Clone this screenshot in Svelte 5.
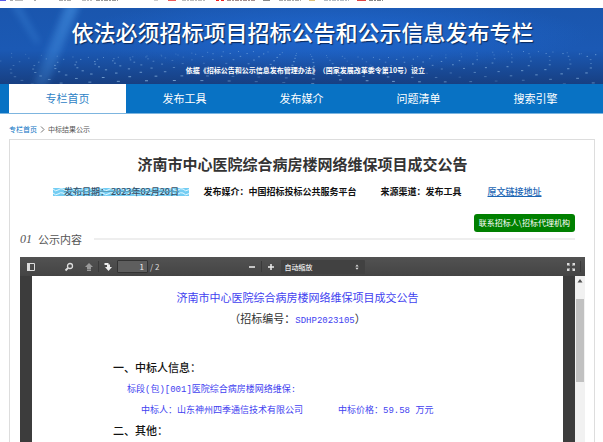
<script>
	const tabs = ['专栏首页', '发布工具', '发布媒介', '问题清单', '搜索引擎'];

	let active = $state(0);
	let page = $state('1');
	let zoom = $state('自动缩放');

	// bottom edge of the bookmarks bar: [x, width, colour]
	const marks = [
		[0, 6, '#5a5ae8'], [10, 3, '#aaa'], [15, 8, '#bbb'], [34, 2, '#aaa'], [59, 13, '#aaa'],
		[82, 10, '#bbb'], [96, 22, '#999'], [154, 4, '#ccc'], [168, 8, '#ec5c5c'], [182, 24, '#bbb'],
		[216, 3, '#e22'], [221, 3, '#e22'], [227, 28, '#a58f8f'], [263, 7, '#888'], [279, 22, '#aaa'],
		[309, 6, '#dcc17c'], [324, 25, '#b4bcc4'], [357, 9, '#dd4545'], [369, 14, '#888']
	];

	// fan of light dashes on the banner
	const dots = [];
	for (let k = -24; k <= 24; k++) {
		for (let r = 0; r < 9; r++) {
			const t = r / 8;
			const n = Math.abs(Math.sin(k * 12.9 + r * 78.2));
			dots.push({
				x: 310 + k * (15 + 13 * t) + n * 3,
				y: 46 + 29 * t ** 1.3 + Math.sin(k / 3) * 3,
				w: 1 + 2 * t,
				o: 0.2 + 0.45 * n * (0.5 + t / 2)
			});
		}
	}
	const sparks = [];
	for (let i = 0; i < 34; i++) {
		const n = Math.abs(Math.sin(i * 37.7));
		sparks.push({ x: 603 - n * n * 18, y: 2 + i * 1.4, c: i % 3 ? '#9fb8e8' : '#d8a4ac' });
	}
</script>

<svg class="bookmarks" viewBox="0 0 603 8" preserveAspectRatio="xMinYMin slice" aria-hidden="true">
	{#each marks as [x, w, c]}
		<line x1={x} x2={x + w} y1="0.5" y2="0.5" stroke={c} stroke-dasharray={w > 9 ? '4 1 2 1' : 'none'} />
	{/each}
</svg>

<header>
	<svg class="art" viewBox="0 0 603 76" preserveAspectRatio="xMidYMid slice" aria-hidden="true">
		<defs>
			<linearGradient id="beam" x1="1" y1="0" x2="0" y2="1">
				<stop offset="0" stop-color="#4fa0ee" stop-opacity=".5" />
				<stop offset="1" stop-color="#4fa0ee" stop-opacity=".2" />
			</linearGradient>
			<filter id="soft"><feGaussianBlur stdDeviation="3" /></filter>
		</defs>
		<polygon points="66,-4 80,-4 46,80 32,80" fill="url(#beam)" filter="url(#soft)" />
		<polygon points="10,-4 20,-4 40,34 36,36" fill="#4fa0ee" opacity=".25" filter="url(#soft)" />
		{#each dots as d}
			<rect x={d.x} y={d.y} width={d.w} height="1" fill="#a9d2f5" opacity={d.o} />
		{/each}
		{#each sparks as s}
			<rect x={s.x} y={s.y} width="1" height="1" fill={s.c} opacity=".7" />
		{/each}
	</svg>
	<div class="banner">
		<h1>依法必须招标项目招标公告和公示信息发布专栏</h1>
		<p>依据《招标公告和公示信息发布管理办法》（国家发展改革委令第10号）设立</p>
	</div>
</header>

<nav class="tabs">
	{#each tabs as tab, i}
		<a href="#tab{i}" class:active={active === i} onclick={() => (active = i)}>{tab}</a>
	{/each}
</nav>

<main>
	<div class="crumbs">
		<a href="#home">专栏首页</a>
		<svg width="5" height="7" viewBox="0 0 5 7"><path d="M1 .5 4 3.5 1 6.5" /></svg>
		<span>中标结果公示</span>
	</div>

	<article>
		<h2>济南市中心医院综合病房楼网络维保项目成交公告</h2>
		<div class="meta">
			<div class="date">
				<svg class="wave" aria-hidden="true">
					<defs>
						<pattern id="waves" width="10" height="4" patternUnits="userSpaceOnUse">
							<path d="M0 1 Q2.500 4 5 2 T10 1" fill="none" stroke="#e4f8ff" />
						</pattern>
					</defs>
					<rect width="100%" height="100%" fill="url(#waves)" />
				</svg>
				<span>发布日期： <time datetime="2023-02-20">2023年02月20日</time></span>
			</div>
			<span>发布媒介：中国招标投标公共服务平台</span>
			<span class="source">来源渠道：发布工具</span>
			<a href="#origin">原文链接地址</a>
		</div>

		<div class="actions">
			<button class="contact">联系招标人\招标代理机构</button>
		</div>

		<h3><em>01</em>公示内容</h3>

		<section class="viewer">
			<div class="toolbar">
				<div class="group">
					<button aria-label="侧边栏">
						<svg viewBox="0 0 10 10"><path d="M1.500 1.500h7v7h-7z" fill="none" stroke="#ddd" /><path d="M1 1h3v8H1z" fill="#ddd" /></svg>
					</button>
					<button class="find" aria-label="查找">
						<svg viewBox="0 0 10 10" fill="none" stroke="#ddd"><circle cx="6" cy="4" r="2.500" stroke-width="1.300" /><path d="M4 6 1.500 8.500" stroke-width="1.800" /></svg>
					</button>
					<button class="prev" aria-label="上一页">
						<svg viewBox="0 0 10 10" fill="#999"><path d="M5 1 9 5H7v2H3V5H1zM3 7.500h4V9H3z" /></svg>
					</button>
					<i></i>
					<button aria-label="下一页">
						<svg viewBox="0 0 10 10" fill="#eee"><path d="M1.500 1h4v1.500H7V5h2L5.500 9 2 5h2V3H1.500z" /></svg>
					</button>
					<input aria-label="页码" bind:value={page} />
					<span>/ 2</span>
				</div>
				<div class="group">
					<button aria-label="缩小">
						<svg viewBox="0 0 10 10"><path d="M2 5h6" stroke="#eee" stroke-width="1.500" /></svg>
					</button>
					<i></i>
					<button aria-label="放大">
						<svg viewBox="0 0 10 10"><path d="M2 5h6M5 2v6" stroke="#eee" stroke-width="1.500" /></svg>
					</button>
					<label class="zoom">
						<select aria-label="缩放" bind:value={zoom}>
							<option>自动缩放</option>
							<option>实际大小</option>
						</select>
						<svg viewBox="0 0 10 10" fill="#ddd"><path d="M5 2 7 4.500H3zM5 8.500 3 6h4z" /></svg>
					</label>
				</div>
				<div class="group end">
					<button aria-label="全屏">
						<svg viewBox="0 0 10 10" fill="#ddd"><path d="M1 1h3L3 2l1 1-1 1-1-1-1 1zM9 1v3L8 3 7 4 6 3l1-1-1-1zM1 9V6l1 1 1-1 1 1-1 1 1 1zM9 9H6l1-1-1-1 1-1 1 1 1-1z" /></svg>
					</button>
					<i></i>
				</div>
			</div>

			<div class="stage">
				<div class="sheet">
					<h4>济南市中心医院综合病房楼网络维保项目成交公告</h4>
					<p class="code">（招标编号：<span>SDHP2023105</span>）</p>
					<h5>一、中标人信息：</h5>
					<p class="lot">标段(包)[001]医院综合病房楼网络维保:</p>
					<p class="winner"><span>中标人：山东神州四季通信技术有限公司</span><span>中标价格：59.58 万元</span></p>
					<h5>二、其他：</h5>
				</div>
				<div class="scroll">
					<svg viewBox="0 0 10 10" fill="#505050"><path d="M5 3 7.500 6.500h-5z" /></svg>
					<div class="thumb"></div>
				</div>
			</div>
		</section>
	</article>
</main>

<style>
	:global(body) {
		overflow: hidden;
		background: #fff;
		font-family: 'Noto Sans CJK SC', sans-serif;
		color: #333;
	}

	:global(#app) {
		display: flex;
		flex-direction: column;
		height: 100vh;
	}

	h1, h2, h3, h4, h5, p {
		margin: 0;
		font-weight: 400;
	}

	button, input, select {
		font-family: inherit;
		margin: 0;
		padding: 0;
		border: 0;
	}

	.bookmarks {
		display: block;
		flex: none;
		width: 100%;
		height: 8px;
		background: #fff;
	}

	header {
		display: grid;
		flex: none;
		height: 76px;
		overflow: hidden;
		background:
			radial-gradient(ellipse at 55% 35%, rgba(33, 108, 216, 0.75), transparent 55%),
			linear-gradient(#1a56ae, #1b59b4 55%, #173f82);
	}

	.art, .banner {
		grid-area: 1 / 1;
		min-height: 0;
		width: 100%;
		height: 100%;
	}

	.banner {
		color: #fff;
		text-align: center;
		z-index: 1;
	}

	h1 {
		padding: 8px 0 0 2px;
		font-size: 22px;
		line-height: 30px;
		font-weight: 500;
		white-space: nowrap;
		text-shadow: 1px 1px 1px #0a2a5c;
	}

	.banner p {
		padding: 18px 0 0 8px;
		font-size: 7px;
		line-height: 12px;
		font-weight: 700;
		text-spacing-trim: space-all;
	}

	.tabs {
		display: grid;
		grid-template-columns: repeat(5, 1fr);
		flex: none;
		padding: 0 9px;
		background: #0872c4;
		border-bottom: 1px solid #7db5df;
	}

	.tabs a {
		color: #fff;
		font-size: 11px;
		line-height: 29px;
		text-align: center;
		text-decoration: none;
	}

	.tabs a.active {
		background: #fff;
		color: #2f83c6;
	}

	main {
		display: flex;
		flex-direction: column;
		flex: 1;
		min-height: 0;
		padding: 0 8px 0 9px;
	}

	.crumbs {
		display: flex;
		align-items: center;
		gap: 3px;
		padding: 9px 0 4px;
		font-size: 7px;
		line-height: 12px;
		color: #555;
	}

	.crumbs a {
		color: #0872c4;
		text-decoration: none;
	}

	.crumbs path {
		fill: none;
		stroke: #777;
	}

	article {
		display: flex;
		flex-direction: column;
		flex: 1;
		min-height: 0;
		padding: 13px 9px 0 10px;
		border: 1px solid #ddd;
		border-bottom: 0;
	}

	h2 {
		font-size: 15px;
		line-height: 22px;
		font-weight: 700;
		text-align: center;
		white-space: nowrap;
	}

	.meta {
		display: flex;
		justify-content: center;
		padding: 10px 10px 0 0;
		font-size: 9px;
		line-height: 14px;
		font-weight: 700;
		white-space: nowrap;
		color: #111;
	}

	.date {
		display: grid;
		align-items: center;
		justify-items: center;
		width: 136px;
		margin-right: 14px;
		font-weight: 500;
		color: #3a4f66;
	}

	.date > * {
		grid-area: 1 / 1;
	}

	.date .wave {
		width: 100%;
		height: 8px;
		background: #74cdf3;
	}

	.date span {
		z-index: 1;
		text-decoration: line-through;
		text-decoration-color: #5a9fbe;
	}

	.source {
		margin: 0 26px 0 24px;
	}

	.meta a {
		font-weight: 500;
		color: #1c66b4;
	}

	.actions {
		display: flex;
		justify-content: flex-end;
		padding: 15px 10px 0 0;
	}

	.contact {
		padding: 0 5px;
		border-radius: 3px;
		background: #008000;
		color: #fff;
		font-size: 8px;
		line-height: 18px;
	}

	h3 {
		display: flex;
		align-items: center;
		padding-right: 10px;
		font-size: 11px;
		line-height: 14px;
		color: #555;
	}

	h3 em {
		margin-right: 6px;
		font-family: 'Liberation Serif', serif;
		font-size: 12px;
	}

	h3::after {
		content: '';
		flex: 1;
		height: 2px;
		margin-left: 12px;
		background: #eee;
	}

	.viewer {
		display: flex;
		flex-direction: column;
		flex: 1;
		min-height: 0;
		margin-top: 11px;
	}

	.toolbar {
		display: grid;
		grid-template-columns: 1fr auto 1fr;
		height: 19px;
		flex: none;
		background: linear-gradient(#525252, #444);
		color: #ddd;
		font-size: 8px;
	}

	.group {
		display: flex;
		align-items: center;
		padding-left: 5px;
	}

	.group.end {
		justify-content: flex-end;
		padding-right: 1px;
	}

	.group button {
		display: grid;
		place-items: center;
		width: 12px;
		height: 14px;
		background: none;
	}

	.group button svg {
		width: 10px;
		height: 10px;
	}

	.group i {
		width: 1px;
		height: 11px;
		margin: 0 3px;
		background: #3a3a3a;
	}

	.find {
		margin-left: 26px;
	}

	.prev {
		margin-left: 8px;
	}

	.group input {
		box-sizing: border-box;
		width: 31px;
		height: 13px;
		margin: 0 2px 0 3px;
		padding-right: 3px;
		border: 1px solid #333;
		border-radius: 1px;
		background: #5e5e5e;
		color: #eee;
		font-size: 8px;
		text-align: right;
	}

	.zoom {
		display: flex;
		align-items: center;
		width: 84px;
		height: 14px;
		margin-left: 4px;
		border-radius: 1px;
		background: #414141;
	}

	.zoom select {
		appearance: none;
		flex: 1;
		padding-left: 4px;
		background: none;
		color: #eee;
		font-size: 7px;
		font-weight: 500;
		line-height: 12px;
	}

	.zoom svg {
		width: 8px;
		height: 8px;
		margin-right: 4px;
	}

	.stage {
		display: flex;
		flex: 1;
		min-height: 0;
		padding-left: 12px;
		background: #3c3c3c;
	}

	.sheet {
		flex: 1;
		margin-right: 12px;
		padding-top: 13px;
		overflow: hidden;
		background: #fff;
		color: #4141f0;
		font-family: 'Liberation Mono', 'Noto Sans CJK SC', monospace;
		font-size: 9px;
		line-height: 21px;
		white-space: nowrap;
	}

	h4 {
		font-size: 11px;
		text-align: center;
	}

	.code {
		color: #333;
		font-size: 11px;
		text-align: center;
	}

	.code span {
		color: #4141f0;
		font-size: 9px;
	}

	h5 {
		padding-left: 81px;
		color: #111;
		font-size: 11px;
		font-weight: 500;
	}

	.code + h5 {
		padding-top: 27px;
	}

	.lot {
		padding-left: 95px;
	}

	.winner {
		display: flex;
		gap: 35px;
		padding-left: 109px;
	}

	.scroll {
		width: 10px;
		background: #f1f1f1;
	}

	.scroll svg {
		display: block;
		width: 10px;
		height: 10px;
	}

	.thumb {
		height: 83px;
		margin: 13px 1px 0;
		background: #c1c1c1;
	}
</style>
